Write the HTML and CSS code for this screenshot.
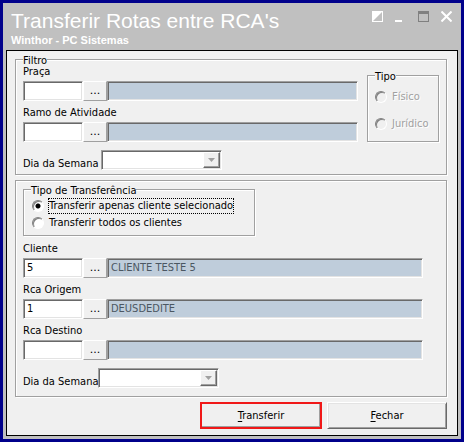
FILE: index.html
```html
<!DOCTYPE html>
<html lang="pt-BR">
<head>
<meta charset="utf-8">
<title>Transferir Rotas entre RCA's</title>
<link rel="stylesheet" href="styles.css">
</head>
<body>
<main class="window">
  <header class="titlebar">
    <div class="titles">
      <h1>Transferir Rotas entre RCA's</h1>
      <p>Winthor - PC Sistemas</p>
    </div>
    <div class="controls">
      <button type="button" aria-label="Alternar"><svg width="11" height="11" viewBox="0 0 11 11"><path d="M0 0h11v11H0z" fill="#fff"/><path d="M10 1v9H1z" fill="#c0c0c0"/></svg></button>
      <button type="button" aria-label="Minimizar"><svg width="11" height="11" viewBox="0 0 11 11"><path d="M0 9h7v2H0z" fill="#fff"/></svg></button>
      <button type="button" aria-label="Maximizar" disabled><svg width="11" height="11" viewBox="0 0 11 11"><path d="M0 0h11v11H0zM1 3v7h9V3z" fill="#808080" fill-rule="evenodd"/></svg></button>
      <button type="button" aria-label="Fechar janela"><svg width="11" height="11" viewBox="0 0 11 11"><path d="M.5.5l10 10M10.500.5l-10 10" stroke="#fff" stroke-width="2"/></svg></button>
    </div>
  </header>
  <form class="panel">
    <fieldset class="group filter">
      <legend>Filtro</legend>
      <div class="filter-top">
        <div class="fields">
          <div class="field">
            <label for="praca">Praça</label>
            <div class="lookup"><input id="praca" class="sunken code" type="text"><button type="button" class="browse" aria-label="Buscar praça">...</button><input class="sunken name" type="text" readonly aria-label="Nome da praça"></div>
          </div>
          <div class="field">
            <label for="ramo">Ramo de Atividade</label>
            <div class="lookup"><input id="ramo" class="sunken code" type="text"><button type="button" class="browse" aria-label="Buscar ramo">...</button><input class="sunken name" type="text" readonly aria-label="Nome do ramo"></div>
          </div>
        </div>
        <fieldset class="group kind" disabled>
          <legend>Tipo</legend>
          <label><input type="radio" name="tipo"><span>Físico</span></label>
          <label><input type="radio" name="tipo"><span>Jurídico</span></label>
        </fieldset>
      </div>
      <div class="weekday wide">
        <label for="dia1">Dia da Semana</label>
        <div class="sunken combo"><select id="dia1" disabled><option></option></select><span class="arrow"><svg width="7" height="4" viewBox="0 0 7 4"><path d="M0 0h7L3.500 4z" fill="#a0a0a0"/></svg></span></div>
      </div>
    </fieldset>

    <section class="group transfer">
      <fieldset class="group mode">
        <legend>Tipo de Transferência</legend>
        <label><input type="radio" name="modo" checked><span class="focused">Transferir apenas cliente selecionado</span></label>
        <label><input type="radio" name="modo"><span>Transferir todos os clientes</span></label>
      </fieldset>
      <div class="fields">
        <div class="field">
          <label for="cliente">Cliente</label>
          <div class="lookup"><input id="cliente" class="sunken code" type="text" value="5"><button type="button" class="browse" aria-label="Buscar cliente">...</button><input class="sunken name" type="text" readonly value="CLIENTE TESTE 5" aria-label="Nome do cliente"></div>
        </div>
        <div class="field">
          <label for="origem">Rca Origem</label>
          <div class="lookup"><input id="origem" class="sunken code" type="text" value="1"><button type="button" class="browse" aria-label="Buscar RCA de origem">...</button><input class="sunken name" type="text" readonly value="DEUSDEDITE" aria-label="Nome do RCA de origem"></div>
        </div>
        <div class="field">
          <label for="destino">Rca Destino</label>
          <div class="lookup"><input id="destino" class="sunken code" type="text"><button type="button" class="browse" aria-label="Buscar RCA de destino">...</button><input class="sunken name" type="text" readonly aria-label="Nome do RCA de destino"></div>
        </div>
      </div>
      <div class="weekday">
        <label for="dia2">Dia da Semana</label>
        <div class="sunken combo"><select id="dia2" disabled><option></option></select><span class="arrow"><svg width="7" height="4" viewBox="0 0 7 4"><path d="M0 0h7L3.500 4z" fill="#a0a0a0"/></svg></span></div>
      </div>
    </section>

    <div class="actions">
      <button type="button" class="action primary"><u>T</u>ransferir</button>
      <button type="button" class="action"><u>F</u>echar</button>
    </div>
  </form>
</main>
</body>
</html>
```
FILE: styles.css
```css
* { box-sizing: border-box; }

body {
  margin: 0;
  font: 11px/14px "DejaVu Sans Condensed", "DejaVu Sans", sans-serif;
  color: #000;
  background: #c0c0c0;
}

input, button, select {
  font: inherit;
  color: inherit;
  margin: 0;
  padding: 0;
  border-radius: 0;
}

.window {
  min-height: 100vh;
  display: flex;
  flex-direction: column;
  border: 3px solid #00008b;
  padding: 0 3px 3px;
  background: #c0c0c0;
}

.titlebar {
  display: flex;
  justify-content: space-between;
  align-items: flex-start;
  padding: 6px 6px 3px 5px;
  color: #fff;
  font-family: "Liberation Sans", Arial, sans-serif;
}

.titlebar h1 { margin: 0; font-size: 21px; line-height: 24px; font-weight: 400; }
.titlebar p { margin: 0; font-weight: 700; }

.controls { display: flex; gap: 12px; padding-top: 2px; }
.controls button { width: 11px; height: 11px; border: 0; background: none; }
.controls svg { display: block; }

.panel {
  flex: 1;
  border: 1px solid #000;
  padding: 4px 10px 4px 8px;
  background: #f0f0f0;
}

.group {
  min-width: 0;
  margin: 0;
  border: 1px solid #a0a0a0;
  padding: 0 7px;
  box-shadow: 1px 1px 0 #fff, inset 1px 1px 0 #fff;
}

.group > legend {
  height: 8px;
  line-height: 12px;
  padding: 0;
  background: #f0f0f0;
  white-space: nowrap;
}

.filter { padding: 2px 7px 4px; margin-bottom: 5px; }
.filter-top { display: flex; align-items: flex-start; gap: 9px; }
.filter-top .fields { flex: 1; }

.fields { display: grid; gap: 5px; }
.field { display: grid; gap: 2px; }
.lookup { display: flex; height: 20px; }

.sunken {
  border: 1px solid;
  border-color: #a0a0a0 #fff #fff #a0a0a0;
  box-shadow: inset 1px 1px 0 #696969, inset -1px -1px 0 #e3e3e3;
  background: #fff;
}

.code { width: 60px; padding: 0 3px; }
.name { flex: 1; min-width: 0; padding: 0 3px; background: #bfcddb; color: #4b5762; }

.browse {
  width: 24px;
  border: 1px solid;
  border-color: #fff #a0a0a0 #a0a0a0 #fff;
  background: #f0f0f0;
  font-family: "DejaVu Sans", sans-serif;
}

.kind { width: 72px; margin-top: 6px; padding: 11px 7px 10px; display: grid; gap: 13px; color: #a0a0a0; text-shadow: 1px 1px 0 #fff; }
.kind legend { color: #000; text-shadow: none; }
.kind label, .mode label { display: flex; align-items: center; gap: 5px; }

input[type="radio"] {
  appearance: none;
  flex: none;
  width: 12px;
  height: 12px;
  border: 1px solid;
  border-color: #808080 #fff #fff #808080;
  border-radius: 50%;
  background: #fff;
  box-shadow: inset 1px 1px 0 #808080;
}
input[type="radio"]:disabled { background: #f0f0f0; }
input[type="radio"]:checked { background: radial-gradient(circle, #000 2px, #fff 3px); }

.weekday { display: flex; align-items: flex-end; gap: 3px; margin-top: 8px; }
.weekday.wide { gap: 6px; }
.weekday label { width: 72px; line-height: 12px; white-space: nowrap; }

.combo { display: flex; width: 121px; height: 20px; padding: 1px; }
.combo select { appearance: none; flex: 1; min-width: 0; border: 0; background: #fff; }
.arrow {
  display: grid;
  place-items: center;
  width: 17px;
  border: 1px solid;
  border-color: #fff #696969 #696969 #fff;
  background: #f0f0f0;
  box-shadow: inset -1px -1px 0 #a0a0a0;
}

.transfer { padding: 4px 7px 8px; }
.mode { width: 232px; max-width: 100%; margin-bottom: 6px; padding: 5px 7px 4px; }
.mode label { gap: 4px; margin-left: 1px; }
.mode label + label { margin-top: 1px; }
.mode span { border: 1px dotted transparent; white-space: nowrap; }
.mode .focused { border-color: #000; }
.transfer > .fields { margin-right: 16px; }

.actions { display: flex; justify-content: flex-end; gap: 5px; padding-top: 5px; }
.action {
  width: 120px;
  height: 27px;
  border: 1px solid;
  border-color: #fff #696969 #696969 #fff;
  background: #f0f0f0;
  box-shadow: inset 1px 1px 0 #e3e3e3, inset -1px -1px 0 #a0a0a0;
}
.action u { text-underline-offset: 2px; }
.primary { width: 122px; border: 2px solid #f01818; box-shadow: inset -1px -1px 0 #a0a0a0; }
```
